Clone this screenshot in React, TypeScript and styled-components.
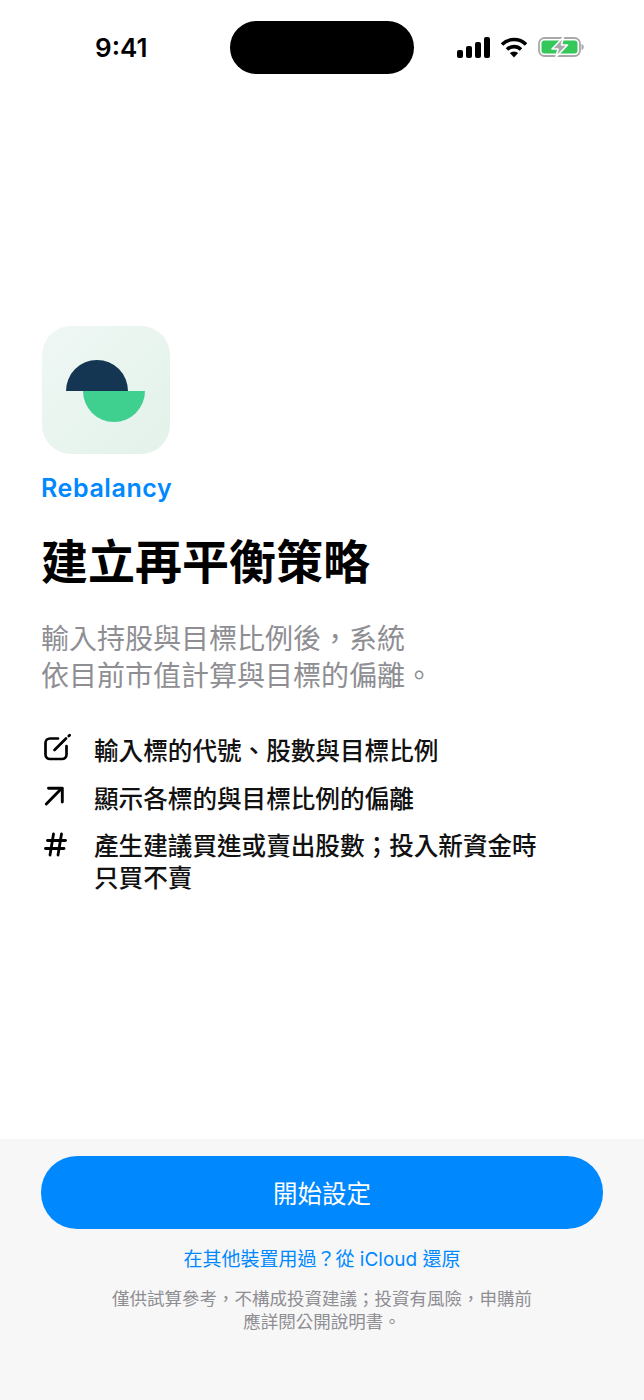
import styled, { createGlobalStyle } from "styled-components";

const GlobalStyle = createGlobalStyle`
  html, body {
    margin: 0;
    padding: 0;
    background: #fff;
  }
  body {
    font-family: Inter, "Noto Sans CJK TC", sans-serif;
  }
`;

const Page = styled.div`
  width: 644px;
  height: 1400px;
  display: flex;
  flex-direction: column;
  overflow: hidden;
`;

const StatusBar = styled.div`
  height: 94px;
  flex-shrink: 0;
  display: grid;
  grid-template-columns: 230px 184px 230px;
  align-items: start;
`;

const Time = styled.div`
  padding: 32px 0 0 95px;
  font-size: 26px;
  line-height: 32px;
  font-weight: 600;
  color: #000;
`;

const Island = styled.div`
  margin-top: 21px;
  height: 53px;
  background: #000;
  border-radius: 27px;
`;

const StatusIcons = styled.div`
  display: flex;
  align-items: center;
  gap: 10px;
  padding: 36px 0 0 43px;
`;

const Main = styled.main`
  flex: 1;
  padding: 232px 41px 0;
`;

const AppIcon = styled.div`
  width: 128px;
  height: 128px;
  margin-left: 1px;
  border-radius: 29px;
  background: linear-gradient(135deg, #eff7f4, #e3f2ea);
`;

const BrandName = styled.div`
  margin-top: 19px;
  font-size: 25px;
  line-height: 30px;
  font-weight: 600;
  letter-spacing: 0.6px;
  color: #0088ff;
`;

const Title = styled.h1`
  margin: 23px 0 0;
  font-family: "Noto Sans CJK TC", sans-serif;
  font-size: 47px;
  line-height: 66px;
  font-weight: 700;
  color: #000;
`;

const Subtitle = styled.p`
  margin: 27px 0 0;
  font-family: "Noto Sans CJK TC", sans-serif;
  font-size: 28px;
  line-height: 37px;
  color: #8e8e93;
`;

const FeatureList = styled.ul`
  list-style: none;
  margin: 40px 0 0;
  padding: 0;
  display: flex;
  flex-direction: column;
  gap: 15.5px;
`;

const Feature = styled.li`
  display: flex;
  align-items: flex-start;
  gap: 23px;
  font-family: "Noto Sans CJK TC", sans-serif;
  font-size: 24.6px;
  line-height: 32px;
  font-weight: 500;
  color: #111;
`;

const FeatureIcon = styled.svg`
  width: 30px;
  height: 32px;
  flex-shrink: 0;
  fill: none;
  stroke: #000;
  stroke-linecap: round;
  stroke-linejoin: round;
`;

const FeatureText = styled.span`
  white-space: pre-line;
`;

const Footer = styled.footer`
  flex-shrink: 0;
  height: 261px;
  box-sizing: border-box;
  padding: 17px 41px 0;
  background: #f7f7f7;
  display: flex;
  flex-direction: column;
  align-items: center;
`;

const StartButton = styled.button`
  width: 100%;
  height: 73px;
  flex-shrink: 0;
  border: none;
  border-radius: 36px;
  background: #0088ff;
  color: #fff;
  font-family: "Noto Sans CJK TC", sans-serif;
  font-size: 24.5px;
`;

const RestoreLink = styled.a`
  margin-top: 17px;
  font-family: Inter, "Noto Sans CJK TC", sans-serif;
  font-size: 19px;
  line-height: 27px;
  color: #0088ff;
`;

const Disclaimer = styled.p`
  margin: 13px 0 0;
  width: 430px;
  text-align: center;
  font-family: "Noto Sans CJK TC", sans-serif;
  font-size: 17.5px;
  line-height: 23px;
  color: #8e8e93;
`;

function SignalIcon() {
  return (
    <svg width="33" height="21" viewBox="0 0 33 21" fill="#000">
      <rect x="0" y="13" width="6" height="8" rx="2" />
      <rect x="9" y="9" width="6" height="12" rx="2" />
      <rect x="18" y="5" width="6" height="16" rx="2" />
      <rect x="27" y="0" width="6" height="21" rx="2" />
    </svg>
  );
}

function WifiIcon() {
  return (
    <svg width="28" height="21" viewBox="0 0 28 21" fill="none" stroke="#000" strokeWidth="3.6">
      <path d="M2 7.5a17 17 0 0 1 24 0" />
      <path d="M7 12.5a10 10 0 0 1 14 0" />
      <path d="M14 20.5l-4.2-4.4a6 6 0 0 1 8.4 0z" fill="#000" stroke="none" />
    </svg>
  );
}

function BatteryIcon() {
  return (
    <svg width="46" height="22" viewBox="0 0 46 22">
      <rect x="1" y="2" width="41" height="18" rx="5.5" fill="none" stroke="#a9a9ab" strokeWidth="1.8" />
      <rect x="3.5" y="4.5" width="36" height="13" rx="3" fill="#34c759" />
      <path d="M43.500 8c1.500.4 2.300 1.500 2.300 3s-.8 2.600-2.300 3z" fill="#a9a9ab" />
      <path
        d="M25.500 1L14 13h6L18 21L29.500 9H23.500z"
        fill="#a9a9ab"
        stroke="#fff"
        strokeWidth="1.6"
        strokeLinejoin="round"
      />
    </svg>
  );
}

function LogoMark() {
  return (
    <svg width="128" height="128" viewBox="0 0 128 128">
      <path d="M24 65a31 31 0 0 1 62 0z" fill="#143652" />
      <path d="M41 65h62a31 31 0 0 1-62 0z" fill="#3fd08f" />
    </svg>
  );
}

function PenIcon() {
  return (
    <FeatureIcon viewBox="0 0 30 32" strokeWidth="2.7">
      <path d="M17 5.500H9a4.500 4.500 0 0 0-4.500 4.500v11.500A4.500 4.500 0 0 0 9 26h12a4.500 4.500 0 0 0 4.500-4.500V13" />
      <path d="M13.500 17L25 5.500" />
      <path d="M27.800 3L28.600 2.200" />
    </FeatureIcon>
  );
}

function ArrowIcon() {
  return (
    <FeatureIcon viewBox="0 0 30 32" strokeWidth="2.9">
      <path d="M5.300 23L20.500 7.500" />
      <path d="M7.500 7.300H21.300V21" />
    </FeatureIcon>
  );
}

function HashIcon() {
  return (
    <FeatureIcon viewBox="0 0 30 32" strokeWidth="2.8">
      <path d="M6.500 12.500H24.500" />
      <path d="M4.500 20.500H23" />
      <path d="M12.500 6L9 27" />
      <path d="M20.500 6L17 27" />
    </FeatureIcon>
  );
}

const features = [
  { icon: PenIcon, text: "輸入標的代號、股數與目標比例" },
  { icon: ArrowIcon, text: "顯示各標的與目標比例的偏離" },
  { icon: HashIcon, text: "產生建議買進或賣出股數；投入新資金時\n只買不賣" },
];

export default function App() {
  return (
    <Page>
      <GlobalStyle />
      <StatusBar>
        <Time>9:41</Time>
        <Island />
        <StatusIcons>
          <SignalIcon />
          <WifiIcon />
          <BatteryIcon />
        </StatusIcons>
      </StatusBar>
      <Main>
        <AppIcon>
          <LogoMark />
        </AppIcon>
        <BrandName>Rebalancy</BrandName>
        <Title>建立再平衡策略</Title>
        <Subtitle>
          輸入持股與目標比例後，系統
          <br />
          依目前市值計算與目標的偏離。
        </Subtitle>
        <FeatureList>
          {features.map(({ icon: Icon, text }) => (
            <Feature key={text}>
              <Icon />
              <FeatureText>{text}</FeatureText>
            </Feature>
          ))}
        </FeatureList>
      </Main>
      <Footer>
        <StartButton>開始設定</StartButton>
        <RestoreLink>在其他裝置用過？從 iCloud 還原</RestoreLink>
        <Disclaimer>僅供試算參考，不構成投資建議；投資有風險，申購前應詳閱公開說明書。</Disclaimer>
      </Footer>
    </Page>
  );
}
